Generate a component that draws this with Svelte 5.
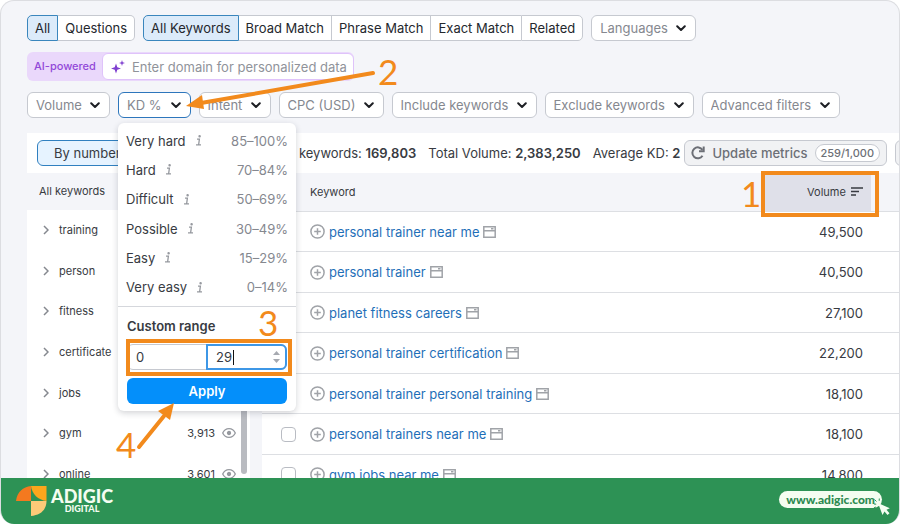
<script lang="ts">
  interface Level {
    label: string;
    range: string;
  }

  interface Group {
    name: string;
    count?: string;
  }

  interface Row {
    keyword: string;
    volume: string;
  }

  const scopes = ['All', 'Questions'];
  const matches = ['All Keywords', 'Broad Match', 'Phrase Match', 'Exact Match', 'Related'];
  const filtersAfter = ['Intent', 'CPC (USD)', 'Include keywords', 'Exclude keywords', 'Advanced filters'];

  const levels: Level[] = [
    { label: 'Very hard', range: '85–100%' },
    { label: 'Hard', range: '70–84%' },
    { label: 'Difficult', range: '50–69%' },
    { label: 'Possible', range: '30–49%' },
    { label: 'Easy', range: '15–29%' },
    { label: 'Very easy', range: '0–14%' },
  ];

  const groups: Group[] = [
    { name: 'training' },
    { name: 'person' },
    { name: 'fitness' },
    { name: 'certificate' },
    { name: 'jobs' },
    { name: 'gym', count: '3,913' },
    { name: 'online', count: '3,601' },
  ];

  const rows: Row[] = [
    { keyword: 'personal trainer near me', volume: '49,500' },
    { keyword: 'personal trainer', volume: '40,500' },
    { keyword: 'planet fitness careers', volume: '27,100' },
    { keyword: 'personal trainer certification', volume: '22,200' },
    { keyword: 'personal trainer personal training', volume: '18,100' },
    { keyword: 'personal trainers near me', volume: '18,100' },
    { keyword: 'gym jobs near me', volume: '14,800' },
  ];

  let scope = $state('All');
  let match = $state('All Keywords');
  let kdOpen = $state(true);
  let kdFrom = $state('0');
  let kdTo = $state('29');
</script>

{#snippet chevron()}
  <svg class="chevron" width="10" height="7" viewBox="0 0 10 7" fill="none" stroke="currentColor" stroke-width="2" stroke-linecap="round" stroke-linejoin="round" aria-hidden="true">
    <path d="M1.2 1.2 5 5l3.800-3.800" />
  </svg>
{/snippet}

{#snippet dropdown(name: string)}
  <div class="filter">
    <select class="filter-select" aria-label={name}>
      <option>{name}</option>
    </select>
    {@render chevron()}
  </div>
{/snippet}

<div class="frame">
  <main class="content">
    <div class="toolbar">
      <div class="tool-row">
        <div class="segment">
          {#each scopes as item}
            <button type="button" class="seg-btn" class:active={scope === item} onclick={() => (scope = item)}>{item}</button>
          {/each}
        </div>
        <div class="segment">
          {#each matches as item}
            <button type="button" class="seg-btn" class:active={match === item} onclick={() => (match = item)}>{item}</button>
          {/each}
        </div>
        {@render dropdown('Languages')}
      </div>

      <div class="ai-bar">
        <label class="ai-label" for="ai-domain">AI-powered</label>
        <div class="ai-field">
          <svg width="14" height="14" viewBox="0 0 14 14" fill="#7f3fd0" aria-hidden="true">
            <path d="M5 3.500 6.300 7.200 10 8.500 6.300 9.800 5 13.500 3.700 9.800 0 8.500 3.700 7.200Z" />
            <path d="M11 0 11.700 2.300 14 3 11.700 3.700 11 6 10.300 3.700 8 3 10.300 2.300Z" />
          </svg>
          <input id="ai-domain" class="ai-input" type="text" placeholder="Enter domain for personalized data" />
        </div>
      </div>

      <div class="tool-row">
        {@render dropdown('Volume')}
        <div class="kd">
          <button type="button" class="filter kd-btn" aria-expanded={kdOpen} onclick={() => (kdOpen = !kdOpen)}>
            KD %
            {@render chevron()}
          </button>

          {#if kdOpen}
            <div class="popup">
              <div class="levels">
                {#each levels as level}
                  <button type="button" class="level">
                    {level.label}
                    <svg class="info" width="6" height="11" viewBox="0 0 6 11" fill="none" stroke="currentColor" stroke-width="1.300" aria-hidden="true">
                      <path d="M1 4.200h2.400L2.600 9.800M0 9.900h5" />
                      <circle cx="3.600" cy="1.300" r=".6" fill="currentColor" />
                    </svg>
                    <span class="level-range">{level.range}</span>
                  </button>
                {/each}
              </div>
              <div class="custom">
                <div class="custom-title">Custom range</div>
                <div class="range">
                  <input class="range-input" type="text" inputmode="numeric" aria-label="KD from" bind:value={kdFrom} />
                  <div class="range-to">
                    <input class="range-input" type="text" inputmode="numeric" aria-label="KD to" size="2" bind:value={kdTo} />
                    <span class="caret"></span>
                    <svg class="spinner" width="7" height="12" viewBox="0 0 7 12" fill="#a6a9b0" aria-hidden="true">
                      <path d="M0 4 3.500 0 7 4ZM0 8l3.500 4L7 8Z" />
                    </svg>
                  </div>
                  <span class="mark mark-range"></span>
                </div>
                <button type="button" class="apply">Apply</button>
              </div>
              <span class="num num-3">3</span>
              <span class="num num-4">4</span>
              <svg class="arrow arrow-4" width="40" height="48" viewBox="0 0 40 48" aria-hidden="true">
                <path d="M3 45 28 14" stroke="#f28a1c" stroke-width="4" stroke-linecap="round" />
                <path d="M38 1 34 18 22 9Z" fill="#f28a1c" />
              </svg>
            </div>
          {/if}

          <span class="num num-2">2</span>
          <svg class="arrow arrow-2" width="190" height="42" viewBox="0 0 190 42" aria-hidden="true">
            <path d="M15 33 187 3" stroke="#f28a1c" stroke-width="4" stroke-linecap="round" />
            <path d="M0 36 16 25 18 39Z" fill="#f28a1c" />
          </svg>
        </div>
        {#each filtersAfter as name}
          {@render dropdown(name)}
        {/each}
      </div>
    </div>

    <div class="panels">
      <aside class="side">
        <div class="side-tabs">
          <button type="button" class="side-tab">By number</button>
        </div>
        <div class="side-head">All keywords</div>
        <div class="side-body">
          <ul class="groups">
            {#each groups as group}
              <li class="group">
                <svg width="6" height="10" viewBox="0 0 6 10" fill="none" stroke="#85888f" stroke-width="1.500" aria-hidden="true">
                  <path d="M1 1l4 4-4 4" />
                </svg>
                <span class="group-name">{group.name}</span>
                {#if group.count}
                  <span class="group-count">{group.count}</span>
                  <svg width="14" height="10" viewBox="0 0 14 10" fill="none" stroke="#96999f" stroke-width="1.300" aria-hidden="true">
                    <path d="M.7 5C2 2.200 4.300.7 7 .7S12 2.200 13.300 5C12 7.800 9.700 9.300 7 9.300S2 7.800.7 5Z" />
                    <circle cx="7" cy="5" r="1.500" fill="#96999f" />
                  </svg>
                {/if}
              </li>
            {/each}
          </ul>
          <div class="scrollbar"></div>
        </div>
      </aside>

      <section class="results">
        <div class="summary">
          <div class="stats">
            <span>All keywords: <b>169,803</b></span>
            <span>Total Volume: <b>2,383,250</b></span>
            <span>Average KD: <b>2</b></span>
          </div>
          <button type="button" class="metrics">
            <svg width="14" height="14" viewBox="0 0 14 14" fill="none" stroke="currentColor" stroke-width="2" aria-hidden="true">
              <path d="M11.500 9.800A5.500 5.500 0 1 1 11.500 3.900" />
              <path d="M12.700.5v4.800H8" />
            </svg>
            Update metrics
            <span class="quota">259/1,000</span>
          </button>
          <button type="button" class="metrics metrics-next" aria-label="Export"></button>
        </div>

        <table class="table">
          <thead>
            <tr>
              <th class="col-check"></th>
              <th>Keyword</th>
              <th class="col-volume">
                Volume
                <svg class="sort" width="12" height="9" viewBox="0 0 12 9" fill="none" stroke="currentColor" stroke-width="1.500" aria-hidden="true">
                  <path d="M0 1h12M0 4.500h8M0 8h5" />
                </svg>
                <span class="mark mark-volume"></span>
                <span class="num num-1">1</span>
              </th>
              <th class="col-end"></th>
            </tr>
          </thead>
          <tbody>
            {#each rows as row}
              <tr>
                <td class="col-check"><input class="check" type="checkbox" aria-label={row.keyword} /></td>
                <td>
                  <div class="keyword">
                    <svg width="15" height="15" viewBox="0 0 15 15" fill="none" stroke="#a0a3a8" stroke-width="1.500" aria-hidden="true">
                      <circle cx="7.500" cy="7.500" r="6.600" />
                      <path d="M7.500 4.200v6.600M4.200 7.500h6.600" />
                    </svg>
                    <a class="keyword-link" href="#keyword">{row.keyword}</a>
                    <svg width="13" height="12" viewBox="0 0 13 12" fill="none" stroke="#a0a3a8" stroke-width="1.500" aria-hidden="true">
                      <path d="M.8.8h11.400v10.400H.8zM.8 4.800h11.400M8 2.800h2.500" />
                    </svg>
                  </div>
                </td>
                <td class="col-volume">{row.volume}</td>
                <td class="col-end"></td>
              </tr>
            {/each}
          </tbody>
        </table>
      </section>
    </div>
  </main>

  <footer class="footer">
    <div class="brand">
      <svg width="31" height="30" viewBox="0 0 31 30" aria-hidden="true">
        <path d="M0 15C1 6 7 1 15 0v15Z" fill="#f4791f" />
        <path d="M15 0h15.500v15C22 14 16 8 15 0Z" fill="#fba61c" />
        <path d="M15 15h15.500c0 9-6 14-15.500 15Z" fill="#fdca78" />
      </svg>
      <div class="brand-text">
        <span class="brand-name">ADIGIC</span>
        <span class="brand-sub">DIGITAL</span>
      </div>
    </div>
    <a class="site" href="#site">
      www.adigic.com
      <svg class="cursor" width="18" height="18" viewBox="0 0 18 18" aria-hidden="true">
        <path d="M5 5l4.500 12 2-3.500L14.500 17l2-1.800-3-3.400 3.300-1.600Z" fill="#f4fdf1" />
        <path d="M1 6l2.200.2M1.500 1.500l2 2M6.300.5l-.1 2.300M.8 10l2-1" stroke="#2d9255" stroke-width="1" />
      </svg>
    </a>
  </footer>
</div>

<style>
  :global(body) {
    background: #fff;
  }

  .frame {
    --accent: #f28a1c;
    --line: #c6c9d0;
    --muted: #85888f;
    --text: #383b42;

    box-sizing: border-box;
    display: flex;
    flex-direction: column;
    height: 100vh;
    border: 1px solid #dcdde1;
    border-bottom: 0;
    border-radius: 14px;
    background: #f4f5f9;
    color: var(--text);
    font-family: Inter, "Liberation Sans", sans-serif;
    font-size: 13px;
    line-height: 16px;
    overflow: hidden;
  }

  .frame *,
  .frame *::before {
    box-sizing: border-box;
  }

  button,
  input,
  select {
    margin: 0;
    font: inherit;
    color: inherit;
  }

  .content {
    flex: 1;
    min-height: 0;
    display: flex;
    flex-direction: column;
    overflow: hidden;
  }

  /* Toolbar */
  .toolbar {
    display: flex;
    flex-direction: column;
    align-items: flex-start;
    gap: 11px;
    padding: 14px 26px 15px;
  }

  .tool-row {
    display: flex;
    gap: 8px;
  }

  .segment {
    display: flex;
  }

  .seg-btn {
    height: 26px;
    padding: 0 7px;
    border: 1px solid var(--line);
    border-right-width: 0;
    background: #fff;
    color: #24272d;
    white-space: nowrap;
  }

  .seg-btn:first-child {
    border-radius: 5px 0 0 5px;
  }

  .seg-btn:last-child {
    border-right-width: 1px;
    border-radius: 0 5px 5px 0;
  }

  .seg-btn.active {
    border: 1px solid #3a86bd;
    background: #dcebfa;
  }

  .seg-btn.active + .seg-btn {
    border-left-width: 0;
  }

  .filter {
    position: relative;
    display: flex;
    align-items: center;
    height: 26px;
    border: 1px solid var(--line);
    border-radius: 6px;
    background: #fff;
    color: var(--muted);
    white-space: nowrap;
  }

  .filter-select {
    appearance: none;
    height: 24px;
    padding: 0 27px 0 8px;
    border: 0;
    background: none;
  }

  .chevron {
    position: absolute;
    right: 9px;
    color: #1d1f24;
    pointer-events: none;
  }

  .ai-bar {
    display: flex;
    border-radius: 6px;
    background: #ead8fb;
  }

  .ai-label {
    width: 75px;
    padding: 6px 7px;
    color: #9248d8;
    font-size: 11px;
    font-weight: 500;
    white-space: nowrap;
  }

  .ai-field {
    display: flex;
    align-items: center;
    gap: 7px;
    width: 252px;
    height: 27px;
    margin: 1px 0;
    padding-left: 8px;
    border: 1px solid #dfc3fa;
    border-radius: 6px;
    background: #fff;
  }

  .ai-input {
    flex: 1;
    min-width: 0;
    padding: 0;
    border: 0;
    background: none;
    outline: none;
  }

  .ai-input::placeholder {
    color: #90939a;
    opacity: 1;
  }

  /* KD filter */
  .kd {
    position: relative;
    z-index: 2;
  }

  .kd-btn {
    padding: 0 28px 0 8px;
    border-color: #2d76bc;
  }

  .popup {
    position: absolute;
    top: 31px;
    left: 0;
    width: 178px;
    border-radius: 6px;
    background: #fff;
    box-shadow: 0 2px 6px rgba(30, 34, 50, 0.2);
  }

  .levels {
    display: grid;
    grid-auto-rows: 1fr;
    height: 184px;
    padding: 3px 0 4px;
    border-bottom: 1px solid #d5d7dc;
  }

  .level {
    display: flex;
    align-items: center;
    gap: 10px;
    padding: 0 8px;
    border: 0;
    background: none;
    text-align: left;
  }

  .info {
    color: #96999f;
  }

  .level-range {
    margin-left: auto;
    color: var(--muted);
  }

  .custom {
    padding: 11px 9px 7px;
  }

  .custom-title {
    margin-bottom: 10px;
    font-weight: 600;
  }

  .range {
    position: relative;
    display: grid;
    grid-template-columns: 1fr 1fr;
    height: 26px;
    margin-bottom: 8px;
    border: 1px solid var(--line);
    border-radius: 6px;
  }

  .range-input {
    min-width: 0;
    padding: 0 8px;
    border: 0;
    background: none;
    outline: none;
  }

  .range-to {
    display: flex;
    align-items: center;
    margin: -1px;
    border: 2px solid #3e97e6;
    border-radius: 0 6px 6px 0;
  }

  .range-to .range-input {
    width: 25px;
    padding-right: 0;
  }

  .caret {
    width: 1px;
    height: 15px;
    background: #111;
  }

  .spinner {
    margin-left: auto;
    margin-right: 5px;
  }

  .apply {
    display: block;
    width: 100%;
    height: 26px;
    padding: 0;
    border: 0;
    border-radius: 6px;
    background: #048ffa;
    color: #fff;
    font-weight: 600;
  }

  /* Numbered guide marks */
  .mark {
    position: absolute;
    border: 4px solid var(--accent);
    pointer-events: none;
  }

  .mark-range {
    inset: -6px -6px -7px -2px;
  }

  .mark-volume {
    inset: -2px -8px -6px -2px;
  }

  .num {
    position: absolute;
    color: var(--accent);
    font-family: Lato, sans-serif;
    font-size: 35px;
    font-weight: 400;
    line-height: 34px;
    pointer-events: none;
  }

  .num-1 {
    top: 3px;
    left: -22px;
  }

  .num-2 {
    top: -38px;
    left: 260px;
  }

  .num-3 {
    top: 182px;
    left: 140px;
  }

  .num-4 {
    top: 304px;
    left: -2px;
  }

  .arrow {
    position: absolute;
    fill: none;
    pointer-events: none;
  }

  .arrow-2 {
    top: -22px;
    left: 68px;
  }

  .arrow-4 {
    top: 279px;
    left: 18px;
  }

  /* Panels */
  .panels {
    flex: 1;
    min-height: 0;
    display: flex;
    gap: 12px;
    padding-left: 26px;
  }

  .side {
    flex: 0 0 223px;
    background: #fff;
  }

  .side-tabs {
    height: 40px;
    padding: 7px 10px;
  }

  .side-tab {
    height: 26px;
    padding: 0 16px;
    border: 1px solid #3080c0;
    border-radius: 6px;
    background: #e6f3ff;
    white-space: nowrap;
  }

  .side-head {
    height: 37px;
    padding: 10px 12px;
    background: #f4f5f9;
    font-size: 11px;
  }

  .side-body {
    display: flex;
  }

  .groups {
    flex: 1;
    display: grid;
    grid-auto-rows: 1fr;
    height: 284px;
    margin: 0;
    padding: 0 5px 0 16px;
    list-style: none;
  }

  .group {
    display: flex;
    align-items: center;
    gap: 10px;
    font-size: 11px;
  }

  .group-name {
    flex: 1;
  }

  .group-count {
    margin-right: -3px;
  }

  .scrollbar {
    width: 6px;
    height: 264px;
    margin-right: 3px;
    border-radius: 3px;
    background: #b9bbc0;
  }

  .results {
    flex: 1;
    min-width: 0;
    background: #fff;
  }

  .summary {
    display: flex;
    gap: 8px;
    height: 40px;
    padding: 7px 0 7px 18px;
  }

  .stats {
    flex: 1;
    min-width: 0;
    display: flex;
    align-items: center;
    gap: 12px;
    margin-right: -6px;
    overflow: hidden;
    white-space: nowrap;
  }

  .stats b {
    font-weight: 600;
  }

  .metrics {
    flex: none;
    display: flex;
    align-items: center;
    gap: 7px;
    height: 26px;
    padding: 0 6px;
    border: 1px solid var(--line);
    border-radius: 6px;
    background: #f1f2f4;
    color: #6c6f76;
    font-weight: 500;
    white-space: nowrap;
  }

  .metrics-next {
    width: 28px;
    margin-right: -24px;
  }

  .quota {
    padding: 0 5px;
    border: 1px solid var(--line);
    border-radius: 9px;
    background: #fff;
    font-size: 11px;
  }

  .table {
    width: 100%;
    border-collapse: separate;
    border-spacing: 0;
    table-layout: fixed;
  }

  th,
  td {
    height: 40px;
    padding: 0;
    border-bottom: 1px solid #dddfe3;
    text-align: left;
    vertical-align: middle;
  }

  tbody tr:nth-child(even) td {
    height: 41px;
  }

  th {
    height: 39px;
    background: #f4f5f9;
    font-size: 11px;
    font-weight: 400;
  }

  .col-check {
    width: 48px;
    padding-left: 19px;
  }

  .col-volume {
    position: relative;
    width: 108px;
    padding-right: 8px;
    text-align: right;
  }

  th.col-volume {
    background: #dfe0e9;
  }

  .col-end {
    width: 28px;
  }

  .sort {
    margin-left: 2px;
  }

  .check {
    appearance: none;
    display: block;
    width: 15px;
    height: 15px;
    border: 1px solid #b9bcc3;
    border-radius: 4px;
    background: #fff;
  }

  .keyword {
    display: flex;
    align-items: center;
    gap: 4px;
  }

  .keyword-link {
    color: #1f6fb8;
    text-decoration: none;
  }

  /* Footer */
  .footer {
    position: relative;
    flex: none;
    display: flex;
    align-items: center;
    justify-content: space-between;
    height: 46px;
    margin: 0 -1px;
    padding: 0 18px 0 16px;
    background: #2d9255;
  }

  .brand {
    display: flex;
    align-items: center;
    gap: 4px;
    color: #f4fdf1;
    font-family: Lato, sans-serif;
    font-weight: 900;
  }

  .brand-text {
    display: flex;
    flex-direction: column;
    align-items: center;
  }

  .brand-name {
    font-size: 18px;
    line-height: 16px;
  }

  .brand-sub {
    font-size: 9px;
    line-height: 10px;
  }

  .site {
    position: relative;
    margin-bottom: 4px;
    padding: 0 7px;
    border-radius: 9px;
    background: #f4fdf1;
    color: #2d8a50;
    font-family: Lato, sans-serif;
    font-size: 12px;
    font-weight: 900;
    line-height: 17px;
    text-decoration: none;
  }

  .cursor {
    position: absolute;
    top: 7px;
    right: -9px;
  }
</style>
